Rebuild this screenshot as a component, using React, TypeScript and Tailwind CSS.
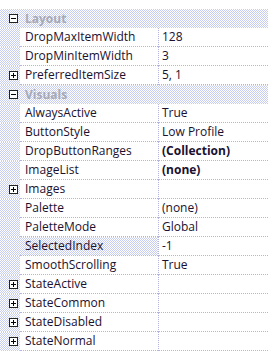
import React from "react";

type Row =
  | { kind: "cat"; label: string }
  | { kind: "prop"; name: string; value?: string; bold?: boolean; plus?: boolean; selected?: boolean };

const rows: Row[] = [
  { kind: "cat", label: "Layout" },
  { kind: "prop", name: "DropMaxItemWidth", value: "128" },
  { kind: "prop", name: "DropMinItemWidth", value: "3" },
  { kind: "prop", name: "PreferredItemSize", value: "5, 1", plus: true },
  { kind: "cat", label: "Visuals" },
  { kind: "prop", name: "AlwaysActive", value: "True" },
  { kind: "prop", name: "ButtonStyle", value: "Low Profile" },
  { kind: "prop", name: "DropButtonRanges", value: "(Collection)", bold: true },
  { kind: "prop", name: "ImageList", value: "(none)", bold: true },
  { kind: "prop", name: "Images", plus: true },
  { kind: "prop", name: "Palette", value: "(none)" },
  { kind: "prop", name: "PaletteMode", value: "Global" },
  { kind: "prop", name: "SelectedIndex", value: "-1", selected: true },
  { kind: "prop", name: "SmoothScrolling", value: "True" },
  { kind: "prop", name: "StateActive", plus: true },
  { kind: "prop", name: "StateCommon", plus: true },
  { kind: "prop", name: "StateDisabled", plus: true },
  { kind: "prop", name: "StateNormal", plus: true },
];

const checker =
  "bg-[repeating-conic-gradient(#c6cdf0_0_25%,#ffffff_0_50%)] bg-[length:2px_2px]";

// little +/- expander box
const Expander = ({ open }: { open: boolean }) => (
  <svg width="9" height="9" viewBox="0 0 9 9" className="block">
    <rect x="0.5" y="0.5" width="8" height="8" fill="#fff" stroke="#222" />
    <line x1="2" y1="4.5" x2="7" y2="4.5" stroke="#000" />
    {!open && <line x1="4.5" y1="2" x2="4.5" y2="7" stroke="#000" />}
  </svg>
);

export default function App() {
  return (
    <div className="w-[278px] h-[361px] bg-white pt-[9px] font-['Open_Sans',sans-serif] text-[12px] text-[#1a1030]">
      <div className="w-[268px] flex flex-col">
        {rows.map((r, i) =>
          r.kind === "cat" ? (
            <div key={i} className={`flex h-[19px] items-center ${checker}`}>
              <div className="w-[20px] flex justify-center pl-[6px]">
                <Expander open />
              </div>
              <span className="pl-[5px] font-bold text-[#a7a9b6]">{r.label}</span>
            </div>
          ) : (
            <div key={i} className="flex h-[19px]">
              <div className={`w-[20px] flex items-center justify-center pl-[6px] ${checker}`}>
                {r.plus && <Expander open={false} />}
              </div>
              <div
                className={`w-[138px] flex items-center pl-[5px] border-b border-dotted border-[#b4b4e2] ${
                  r.selected ? checker : ""
                }`}
              >
                {r.name}
              </div>
              <div
                className={`flex-1 flex items-center pl-[3px] border-l border-b border-dotted border-[#b4b4e2] ${
                  r.bold ? "font-bold" : ""
                }`}
              >
                {r.value}
              </div>
            </div>
          )
        )}
      </div>
    </div>
  );
}
